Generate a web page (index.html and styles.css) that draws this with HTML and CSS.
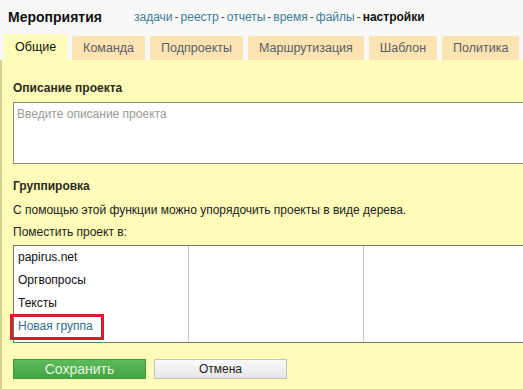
FILE: index.html
```html
<!DOCTYPE html>
<html lang="ru">
<head>
<meta charset="utf-8">
<link rel="stylesheet" href="styles.css">
</head>
<body>
<div class="header">
  <span class="title">Мероприятия</span>
  <nav class="links">
    <a href="#">задачи</a><span class="sep">-</span><a href="#">реестр</a><span class="sep">-</span><a href="#">отчеты</a><span class="sep">-</span><a href="#">время</a><span class="sep">-</span><a href="#">файлы</a><span class="sep">-</span><b>настройки</b>
  </nav>
</div>
<div class="tabs">
  <div class="tab active">Общие</div>
  <div class="tab">Команда</div>
  <div class="tab">Подпроекты</div>
  <div class="tab">Маршрутизация</div>
  <div class="tab">Шаблон</div>
  <div class="tab">Политика</div>
</div>
<div class="panel">
  <div class="label">Описание проекта</div>
  <div class="textarea">Введите описание проекта</div>
  <div class="label group">Группировка</div>
  <div class="text first-text">С помощью этой функции можно упорядочить проекты в виде дерева.</div>
  <div class="text">Поместить проект в:</div>
  <div class="tree">
    <div class="col first">
      <div class="item">papirus.net</div>
      <div class="item">Оргвопросы</div>
      <div class="item">Тексты</div>
      <div class="item newgroup"><a href="#">Новая группа</a></div>
    </div>
    <div class="col second"></div>
    <div class="col third"></div>
  </div>
  <div class="buttons">
    <button class="btn save">Сохранить</button>
    <button class="btn cancel">Отмена</button>
  </div>
</div>
</body>
</html>
```
FILE: styles.css
```css
html, body {
  margin: 0;
  padding: 0;
}
body {
  width: 523px;
  height: 389px;
  overflow: hidden;
  background: #f8f8f6;
  font-family: "Liberation Sans", Arial, sans-serif;
  font-size: 12px;
  color: #222;
}
.header {
  height: 34px;
  display: flex;
  align-items: center;
  padding-left: 8px;
  box-sizing: border-box;
}
.title {
  font-weight: bold;
  font-size: 14px;
  color: #111;
  width: 126px;
}
.links {
  font-size: 12px;
  color: #555;
}
.links a {
  color: #3a7c9c;
  text-decoration: none;
}
.links .sep {
  margin: 0 2px;
  color: #555;
}
.links b {
  color: #111;
}
.tabs {
  display: flex;
  align-items: flex-end;
  height: 26px;
  padding-left: 4px;
  gap: 5px;
}
.tab {
  height: 24px;
  line-height: 24px;
  padding: 0 11px;
  background: #fce3b2;
  color: #5a5f66;
  font-size: 12.5px;
  border-radius: 3px 3px 0 0;
  white-space: nowrap;
}
.tab.active {
  height: 26px;
  line-height: 27px;
  background: #fffbb8;
  color: #111;
}
.panel {
  background: #fffbb8;
  border-left: 2px solid #d3cf90;
  height: 329px;
  padding: 20px 0 0 11px;
  box-sizing: border-box;
}
.label {
  font-weight: bold;
  font-size: 12px;
  color: #2b2b20;
  height: 16px;
  line-height: 16px;
}
.textarea {
  margin-top: 6px;
  height: 62px;
  border: 1px solid #8c8c70;
  border-right: none;
  background: #fff;
  color: #9a9a9a;
  padding: 4px 3px;
  box-sizing: border-box;
  font-size: 12px;
}
.group {
  margin-top: 14px;
}
.text {
  margin-top: 6px;
  height: 16px;
  line-height: 16px;
  color: #222;
}
.text.first-text {
  margin-top: 8px;
}
.tree {
  margin-top: 5px;
  height: 98px;
  display: flex;
  border-top: 1px solid #6f7760;
  border-bottom: 1px solid #6f7760;
  border-left: 1px solid #6f7760;
  background: #fff;
  box-sizing: border-box;
}
.col {
  height: 100%;
}
.col.first {
  width: 174px;
  border-right: 1px solid #c8c8c8;
}
.col.second {
  width: 174px;
  border-right: 1px solid #c8c8c8;
}
.col.third {
  flex: 1;
}
.item {
  height: 23px;
  line-height: 23px;
  padding-left: 4px;
  font-size: 12px;
  color: #111;
}
.item.newgroup {
  position: relative;
}
.item.newgroup::after {
  content: "";
  position: absolute;
  left: -4px;
  top: -1px;
  width: 88px;
  height: 20px;
  border: 3px solid #d4202e;
  pointer-events: none;
}
.item.newgroup a {
  color: #2f6e8e;
  text-decoration: none;
}
.buttons {
  display: flex;
  gap: 8px;
  margin-top: 16px;
}
.btn {
  width: 133px;
  height: 20px;
  font-family: "Liberation Sans", Arial, sans-serif;
  padding: 0;
  cursor: pointer;
}
.save {
  background: linear-gradient(#5cbc5c, #43a443);
  border: 1px solid #3f9a3f;
  color: #e8f5e0;
  font-size: 14px;
}
.cancel {
  background: linear-gradient(#fafafa, #e6e6e6);
  border: 1px solid #c2c2c2;
  color: #222;
  font-size: 12px;
}
```
